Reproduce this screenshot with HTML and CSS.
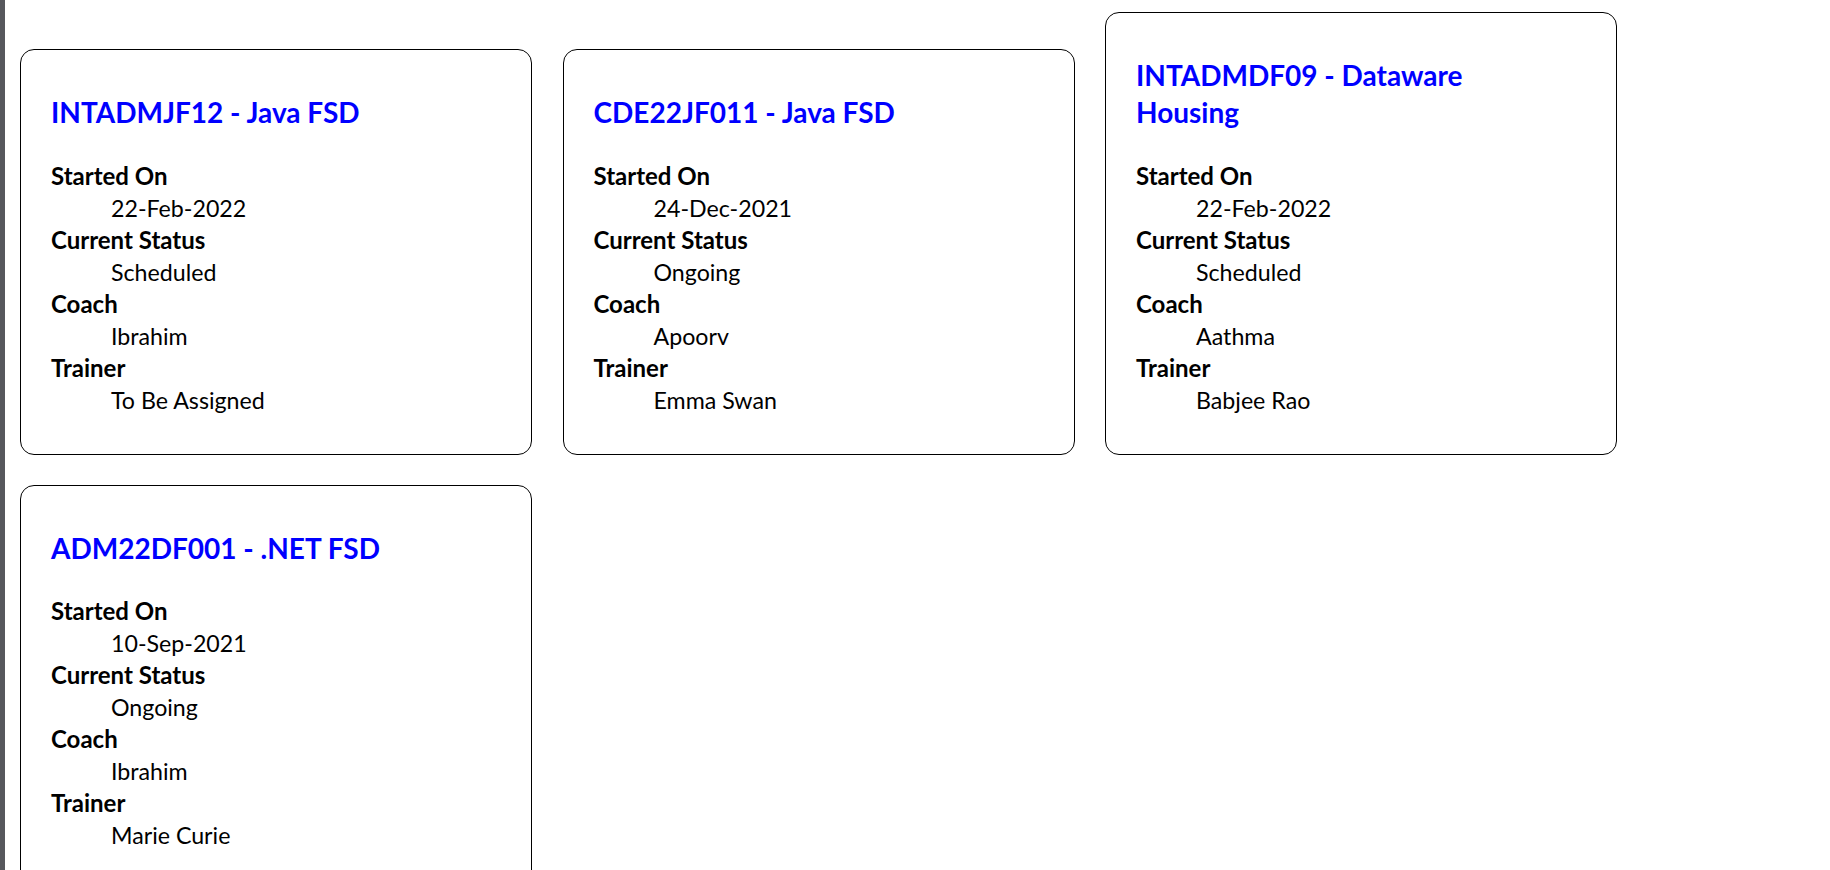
FILE: index.html
```html
<!DOCTYPE html>
<html lang="en">
<head>
<meta charset="utf-8">
<title>Batches</title>
<link rel="stylesheet" href="styles.css">
</head>
<body>
<div class="page">
  <div class="edge"></div>
  <main class="batches">
    <section class="card">
      <h3 class="card-title">INTADMJF12 - Java FSD</h3>
      <dl class="details">
        <dt>Started On</dt><dd>22-Feb-2022</dd>
        <dt>Current Status</dt><dd>Scheduled</dd>
        <dt>Coach</dt><dd>Ibrahim</dd>
        <dt>Trainer</dt><dd>To Be Assigned</dd>
      </dl>
    </section>
    <section class="card">
      <h3 class="card-title">CDE22JF011 - Java FSD</h3>
      <dl class="details">
        <dt>Started On</dt><dd>24-Dec-2021</dd>
        <dt>Current Status</dt><dd>Ongoing</dd>
        <dt>Coach</dt><dd>Apoorv</dd>
        <dt>Trainer</dt><dd>Emma Swan</dd>
      </dl>
    </section>
    <section class="card">
      <h3 class="card-title">INTADMDF09 - Dataware Housing</h3>
      <dl class="details">
        <dt>Started On</dt><dd>22-Feb-2022</dd>
        <dt>Current Status</dt><dd>Scheduled</dd>
        <dt>Coach</dt><dd>Aathma</dd>
        <dt>Trainer</dt><dd>Babjee Rao</dd>
      </dl>
    </section>
    <section class="card">
      <h3 class="card-title">ADM22DF001 - .NET FSD</h3>
      <dl class="details">
        <dt>Started On</dt><dd>10-Sep-2021</dd>
        <dt>Current Status</dt><dd>Ongoing</dd>
        <dt>Coach</dt><dd>Ibrahim</dd>
        <dt>Trainer</dt><dd>Marie Curie</dd>
      </dl>
    </section>
  </main>
</div>
</body>
</html>
```
FILE: styles.css
```css
html, body {
  margin: 0;
  padding: 0;
  background: #ffffff;
}

body {
  font-family: "Lato", "Roboto", sans-serif;
  color: #000000;
}

.page {
  display: flex;
  min-height: 100vh;
}

.edge {
  flex: 0 0 5px;
  background: #56575c;
}

.batches {
  flex: 1;
  display: flex;
  flex-wrap: wrap;
  align-items: flex-end;
  align-content: flex-start;
  gap: 30.5px;
  padding: 12px 0 0 15px;
}

.card {
  box-sizing: border-box;
  width: 512px;
  border: 1px solid #000000;
  border-radius: 14px;
  padding: 16px 30px 15px;
}

.card-title {
  max-width: 410px;
  margin: 28px 0;
  font-size: 28px;
  line-height: 37.3px;
  font-weight: 700;
  color: #0000ff;
}

.details {
  margin: 0 0 23px 0;
  font-size: 23.2px;
  line-height: 32px;
}

.details dt {
  font-size: 24px;
  font-weight: 700;
}

.details dd {
  margin: 0 0 0 60px;
}
```
